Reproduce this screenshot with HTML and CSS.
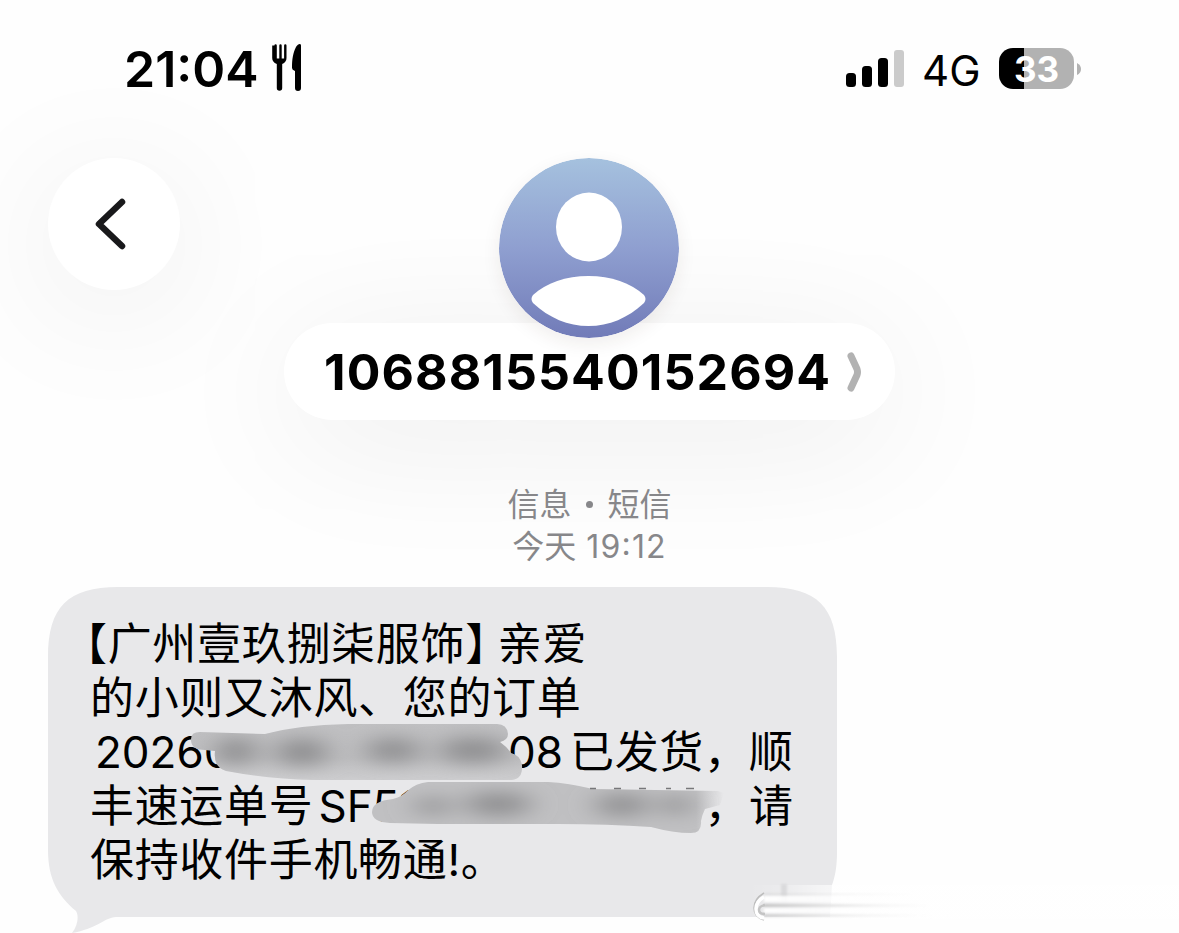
FILE: index.html
```html
<!DOCTYPE html>
<html lang="zh-CN">
<head>
<meta charset="utf-8">
<title>短信</title>
<link rel="stylesheet" href="styles.css">
</head>
<body>
<main class="screen">
  <header class="status">
    <div class="status-left">
      <span class="clock">21:04</span>
      <svg class="cutlery" width="32" height="50" viewBox="0 0 32 50">
        <path d="M2.200 3.500V16Q2.200 20 6.800 22V46a2.700 2.700 0 0 0 5.400 0V22Q16.500 20 16.500 16V3.500a1.200 1.200 0 0 0-2.400 0V16.500H11.700V3.500a1.200 1.200 0 0 0-2.400 0V16.500H6.800V3.500a1.200 1.200 0 0 0-2.400 0Z"/>
        <path d="M31 3.500C31 1 28 1.500 26 5C23 11 22 17 22 26Q22 28 25 29V46a3 3 0 0 0 6 0Z"/>
      </svg>
    </div>
    <div class="status-right">
      <svg class="signal" width="58" height="37" viewBox="0 0 58 37">
        <rect x="0" y="23" width="10" height="14" rx="3.500"/>
        <rect x="16" y="16" width="10" height="21" rx="3.500"/>
        <rect x="32" y="8" width="10" height="29" rx="3.500"/>
        <rect class="signal-off" x="48" y="0" width="10" height="37" rx="3"/>
      </svg>
      <span class="network">4G</span>
      <span class="battery">33</span>
      <svg class="battery-tip" width="4" height="12" viewBox="0 0 4 12"><path d="M0 0Q4 2 4 6T0 12Z"/></svg>
    </div>
  </header>

  <section class="header">
    <button class="back" aria-label="返回">
      <svg width="32" height="52" viewBox="0 0 32 52"><path d="M28 4L5 26L28 48"/></svg>
    </button>
    <div class="contact">
      <svg class="avatar" width="180" height="180" viewBox="0 0 180 180">
        <defs>
          <linearGradient id="sky" x1="0" y1="0" x2="0" y2="1">
            <stop offset="0" stop-color="#a5c1de"/>
            <stop offset=".5" stop-color="#8f9fd0"/>
            <stop offset="1" stop-color="#717bb8"/>
          </linearGradient>
        </defs>
        <circle cx="90" cy="90" r="90" fill="url(#sky)"/>
        <ellipse cx="90" cy="69" rx="33" ry="34.500" fill="#fff"/>
        <path fill="#fff" d="M34 137C47 125 67 118 89.500 118S132 125 145 137Q148 141 145 145C129 160 110 168 89.500 168S50 160 34 145Q31 141 34 137Z"/>
      </svg>
      <div class="pill">
        <span class="number">1068815540152694</span>
        <svg class="chevron" width="14" height="40" viewBox="0 0 14 40"><path d="M4 4L10 17Q11 20 10 23L4 36"/></svg>
      </div>
    </div>
  </section>

  <section class="meta">
    <p class="meta-line">信息<span class="dot"></span>短信</p>
    <p class="meta-line">今天 <span class="time">19:12</span></p>
  </section>

  <article class="bubble">
    <svg class="bubble-shape" width="789" height="346" viewBox="0 0 789 346">
      <path d="M0 70C0 20 20 0 70 0H719C769 0 789 20 789 70V265C789 280 787 290 784 298L782 330H68C56 331 48 342 24 346C30 338 31 329 28 324C10 309 0 292 0 263Z"/>
    </svg>
    <p class="line"><span class="open">【</span>广州壹玖捌柒服饰<span class="close">】</span>亲爱</p>
    <p class="line">的小则又沐风、您的订单</p>
    <p class="line"><span class="latin first">20260</span><span class="latin last">08</span>已发货，顺</p>
    <p class="line">丰速运单号<span class="latin code">SF51</span>，请</p>
    <p class="line">保持收件手机畅通<span class="bang">!</span>。</p>
    <svg class="smears" width="789" height="346" viewBox="0 0 789 346">
      <defs>
        <filter id="soft" x="-100%" y="-200%" width="300%" height="500%"><feGaussianBlur stdDeviation="14 9"/></filter>
        <clipPath id="top"><path d="M152 145Q142 145 143 154Q144 163 157 163L167 164Q165 180 178 184Q220 192 265 193L464 193Q475 192 474 178Q472 168 463 166Q459 160 452 155Q460 153 460 147Q459 137 449 137L300 137Q250 138 217 147Z"/></clipPath>
        <clipPath id="low"><path d="M324 225Q324 214 345 212Q355 209 359 204Q368 196 380 195L500 195Q520 196 545 202L670 204L676 206L672 218L657 222Q654 228 653 234Q654 246 643 246Q625 246 603 240Q560 237 510 237L390 237L342 236Q324 235 324 225Z"/></clipPath>
        <linearGradient id="fade" x1="648" x2="676" gradientUnits="userSpaceOnUse"><stop stop-color="#c0c0c2"/><stop offset="1" stop-color="#e8e8ea"/></linearGradient>
        <linearGradient id="base" x1="0" x2="0" y1="0" y2="1"><stop stop-color="#c0c0c2"/><stop offset=".6" stop-color="#bdbdbf"/><stop offset="1" stop-color="#d0d0d2"/></linearGradient>
      </defs>
      <g clip-path="url(#top)">
        <rect x="140" y="132" width="340" height="65" fill="url(#base)"/>
        <g filter="url(#soft)" fill="#8c8c8e"><ellipse cx="188" cy="164" rx="20" ry="13"/><ellipse cx="254" cy="165" rx="26" ry="13"/><ellipse cx="345" cy="163" rx="28" ry="11"/><ellipse cx="425" cy="163" rx="34" ry="12"/></g>
      </g>
      <g clip-path="url(#low)">
        <rect x="320" y="190" width="360" height="60" fill="url(#fade)"/>
        <g filter="url(#soft)" fill="#8c8c8e"><ellipse cx="385" cy="219" rx="20" ry="7"/><ellipse cx="450" cy="217" rx="34" ry="11"/><ellipse cx="574" cy="218" rx="28" ry="10"/><ellipse cx="628" cy="218" rx="16" ry="8"/></g>
      </g>
      <path class="digit-tops" d="M542 201.500h6M566 201.500h7M591 201.500h7M618 201.500h5M638 201.500h8"/>
    </svg>
  </article>

  <svg class="trail" width="430" height="50" viewBox="0 0 430 50">
    <defs>
      <linearGradient id="trail-fade"><stop stop-color="#fff" stop-opacity="0"/><stop offset=".07" stop-color="#fff" stop-opacity=".15"/><stop offset=".18" stop-color="#fff" stop-opacity=".6"/><stop offset="1" stop-color="#fff" stop-opacity=".6"/></linearGradient>
      <linearGradient id="trail-line" x1="14" x2="200" gradientUnits="userSpaceOnUse"><stop stop-color="#c6c6c6"/><stop offset=".35" stop-color="#e3e3e3"/><stop offset="1" stop-color="#fff" stop-opacity="0"/></linearGradient>
      <linearGradient id="trail-light" x1="14" x2="200" gradientUnits="userSpaceOnUse"><stop stop-color="#fff"/><stop offset="1" stop-color="#fff" stop-opacity="0"/></linearGradient>
      <filter id="haze" x="-10%" y="-200%" width="120%" height="500%"><feGaussianBlur stdDeviation=".8"/></filter>
    </defs>
    <rect x="0" y="5" width="430" height="34" fill="url(#trail-fade)"/>
    <g filter="url(#haze)">
      <rect x="32" y="4" width="6" height="18" fill="#cfcfd1" opacity=".6"/>
      <rect x="15" y="16" width="185" height="6" fill="url(#trail-light)"/>
      <rect x="15" y="28" width="185" height="5" fill="url(#trail-light)"/>
      <rect x="15" y="13.500" width="185" height="1.500" fill="url(#trail-line)" opacity=".5"/>
      <rect x="15" y="24" width="185" height="3" fill="url(#trail-line)"/>
      <rect x="15" y="34.500" width="185" height="2" fill="url(#trail-line)"/>
    </g>
    <path d="M15 13Q5 19 5 28T15 40" fill="none" stroke="#bdbdbd" stroke-width="1.500"/>
    <path d="M15 17Q7 21 7 29T15 38" fill="none" stroke="#fff" stroke-width="3.500"/>
    <path d="M16 25Q10 26 10 30T16 34" fill="none" stroke="#c4c4c4" stroke-width="2.500"/>
  </svg>
</main>
</body>
</html>
```
FILE: styles.css
```css
* { box-sizing: border-box; }
body { margin: 0; background: #fefefe; }
p { margin: 0; }

.screen {
  position: relative;
  width: 1179px;
  height: 933px;
  overflow: hidden;
  background: #fefefe;
  color: #000;
  font-family: Inter, "Noto Sans CJK SC", sans-serif;
}

.status {
  display: flex;
  justify-content: space-between;
  height: 158px;
  padding: 42px 98px 0 124px;
}
.status-left, .status-right { display: flex; height: 54px; }
.clock {
  width: 146px;
  font-size: 50px;
  font-weight: 600;
  line-height: 54px;
  font-feature-settings: "case";
}
.signal { margin: 8px 18px 0 0; }
.signal-off { fill: #cbcbcb; }
.network {
  width: 77px;
  font-size: 42px;
  line-height: 58px;
}
.battery {
  width: 75px;
  height: 41px;
  margin-top: 6px;
  border-radius: 14px;
  background: linear-gradient(90deg, #000 25px, #b2b2b2 25px);
  color: #fff;
  font-size: 35px;
  font-weight: 700;
  line-height: 42px;
  text-align: center;
}
.battery-tip { margin: 21px 0 0 3px; fill: #b2b2b2; }

.header {
  display: flex;
  align-items: flex-start;
  height: 325px;
  padding-left: 48px;
}
.back {
  display: flex;
  align-items: center;
  justify-content: center;
  width: 132px;
  height: 132px;
  padding: 0 8px 0 0;
  border: 0;
  border-radius: 50%;
  background: #fff;
  box-shadow: 0 20px 140px rgba(0, 0, 0, .08);
}
.back path {
  fill: none;
  stroke: #19191b;
  stroke-width: 6.5;
  stroke-linecap: round;
  stroke-linejoin: round;
}
.contact {
  display: flex;
  flex-direction: column;
  align-items: center;
  width: 611px;
  margin-left: 104px;
}
.avatar {
  position: relative;
  z-index: 1;
  margin-right: 1px;
  border-radius: 50%;
  box-shadow: 0 6px 18px rgba(60, 40, 30, .08);
}
.pill {
  display: flex;
  align-items: center;
  width: 611px;
  height: 97px;
  margin-top: -15px;
  padding: 0 31px 0 40px;
  border-radius: 49px;
  background: #fff;
  box-shadow: 0 20px 140px rgba(0, 0, 0, .075);
}
.number {
  width: 523px;
  font-size: 50px;
  font-weight: 700;
  line-height: 60px;
  letter-spacing: 1.1px;
  white-space: nowrap;
}
.chevron path {
  fill: none;
  stroke: #b2b2b2;
  stroke-width: 7;
  stroke-linecap: round;
  stroke-linejoin: round;
}

.meta {
  position: relative;
  height: 104px;
  padding-top: 1px;
  color: #87878a;
  font-size: 32px;
  text-align: center;
}
.meta-line { height: 42px; line-height: 42px; }
.time { margin-left: 1px; letter-spacing: 1.2px; font-feature-settings: "case"; }
.dot {
  display: inline-block;
  width: 7px;
  height: 7px;
  margin: 0 14.500px;
  border-radius: 50%;
  background: #87878a;
  vertical-align: 8px;
}

.bubble {
  position: relative;
  width: 789px;
  height: 346px;
  margin-left: 48px;
  padding: 27px 0 0 42px;
}
.bubble-shape { position: absolute; top: 0; left: 0; fill: #e8e8ea; }
.smears { position: absolute; top: 0; left: 0; }
.line {
  position: relative;
  height: 54px;
  font-family: "Noto Sans CJK SC", sans-serif;
  font-size: 44px;
  line-height: 54px;
  letter-spacing: .68px;
  white-space: nowrap;
}
.open { margin-left: -27px; }
.close { margin-right: -12px; }
.latin { display: inline-block; font-family: Inter, sans-serif; letter-spacing: 0; }
.first { width: 413px; padding-left: 5px; }
.last { width: 67px; padding-left: 5px; }
.code { width: 391px; padding-left: 5px; }
.bang { font-family: Inter, sans-serif; }
.digit-tops { fill: none; stroke: #77777a; stroke-width: 1.5; }

.trail { position: absolute; left: 749px; top: 880px; }
```
